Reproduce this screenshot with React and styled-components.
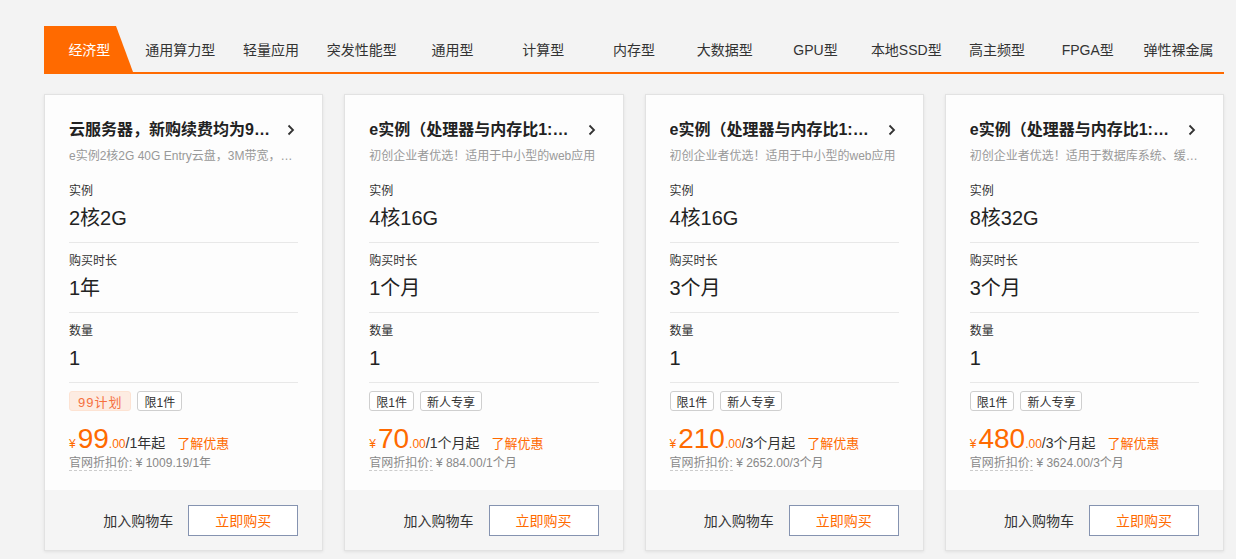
import React from "react";
import styled, { createGlobalStyle } from "styled-components";

const GlobalStyle = createGlobalStyle`
  html, body { margin: 0; padding: 0; background: #f3f3f3; }
  body { font-family: "Liberation Sans", "Noto Sans CJK SC", sans-serif; color: #333; }
  * { box-sizing: border-box; }
`;

const Page = styled.div`
  width: 1236px;
  height: 559px;
  padding: 26px 12px 0 44px;
  overflow: hidden;
`;

const Tabs = styled.div`
  display: flex;
  height: 48px;
  border-bottom: 2px solid #ff6a00;
`;

const Tab = styled.div`
  flex: 1 1 0;
  min-width: 0;
  display: flex;
  align-items: center;
  justify-content: center;
  font-size: 14px;
  color: ${(p) => (p.$active ? "#fff" : "#333")};
  background: ${(p) => (p.$active ? "#ff6a00" : "transparent")};
  clip-path: ${(p) => (p.$active ? "polygon(0 0, 72px 0, 89px 100%, 0 100%)" : "none")};
  white-space: nowrap;
  cursor: pointer;
`;

const Cards = styled.div`
  display: flex;
  gap: 21px;
  margin-top: 20px;
`;

const Card = styled.div`
  flex: 1 1 0;
  min-width: 0;
  background: #fdfdfd;
  border: 1px solid #e2e2e2;
  box-shadow: 0 1px 3px rgba(0, 0, 0, 0.08);
  display: flex;
  flex-direction: column;
`;

const Body = styled.div`
  padding: 24px 24px 18px 24px;
`;

const TitleRow = styled.div`
  display: flex;
  align-items: center;
  height: 22px;
`;

const Title = styled.div`
  flex: 1;
  min-width: 0;
  font-size: 16px;
  font-weight: bold;
  line-height: 22px;
  color: #222;
  white-space: nowrap;
  overflow: hidden;
  text-overflow: ellipsis;
`;

const Chevron = styled.svg`
  width: 8px;
  height: 12px;
  margin-left: 14px;
  margin-right: 3px;
  flex-shrink: 0;
`;

const Sub = styled.div`
  margin-top: 6px;
  font-size: 12px;
  line-height: 18px;
  color: #999;
  white-space: nowrap;
  overflow: hidden;
  text-overflow: ellipsis;
`;

const Specs = styled.div`
  margin-top: 8px;
`;

const Spec = styled.div`
  padding: 9px 0 10px;
  border-bottom: 1px solid #e8e8e8;
`;

const SpecLabel = styled.div`
  font-size: 12px;
  line-height: 18px;
  color: #333;
`;

const SpecValue = styled.div`
  margin-top: 4px;
  font-size: 20px;
  line-height: 28px;
  color: #222;
`;

const TagRow = styled.div`
  display: flex;
  gap: 6px;
  margin-top: 8px;
  height: 20px;
`;

const Tag = styled.span`
  display: inline-flex;
  align-items: center;
  height: 20px;
  padding: 0 ${(p) => (p.$plan ? "8px" : "6px")};
  font-size: ${(p) => (p.$plan ? "13px" : "12px")};
  border-radius: 3px;
  border: 1px solid ${(p) => (p.$plan ? "#fde3d3" : "#cfcfcf")};
  background: ${(p) => (p.$plan ? "#fdece2" : "#fff")};
  color: ${(p) => (p.$plan ? "#f5703e" : "#333")};
  letter-spacing: ${(p) => (p.$plan ? "1px" : "0")};
`;

const PriceRow = styled.div`
  margin-top: 13px;
  height: 30px;
  display: flex;
  align-items: baseline;
  white-space: nowrap;
`;

const Yen = styled.span`
  font-size: 12px;
  color: #ff6a00;
  margin-right: 2px;
`;

const Big = styled.span`
  font-size: 28px;
  color: #ff6a00;
  line-height: 30px;
`;

const Cents = styled.span`
  font-size: 12px;
  color: #ff6a00;
`;

const Unit = styled.span`
  font-size: 14px;
  color: #333;
`;

const Promo = styled.a`
  font-size: 13px;
  color: #ff6a00;
  margin-left: 12px;
  text-decoration: none;
`;

const Official = styled.div`
  margin-top: 0;
  font-size: 12px;
  line-height: 18px;
  color: #888;
  white-space: nowrap;
`;

const Dotted = styled.span`
  border-bottom: 1px dashed #ccc;
`;

const Footer = styled.div`
  height: 60px;
  background: #f5f5f5;
  display: flex;
  align-items: center;
  justify-content: flex-end;
  gap: 15px;
  padding-right: 24px;
`;

const CartLink = styled.span`
  font-size: 14px;
  color: #333;
`;

const BuyButton = styled.button`
  width: 110px;
  height: 31px;
  border: 1px solid #8593b0;
  background: #fff;
  color: #ff6a00;
  font-size: 14px;
  font-family: inherit;
  cursor: pointer;
`;

const tabs = [
  "经济型", "通用算力型", "轻量应用", "突发性能型", "通用型", "计算型", "内存型",
  "大数据型", "GPU型", "本地SSD型", "高主频型", "FPGA型", "弹性裸金属",
];

const cards = [
  {
    title: "云服务器，新购续费均为99元/年",
    sub: "e实例2核2G 40G Entry云盘，3M带宽，不限流量",
    inst: "2核2G", dur: "1年", qty: "1",
    tags: [{ t: "99计划", plan: true }, { t: "限1件" }],
    price: "99", unit: "/1年起", orig: "¥ 1009.19/1年",
  },
  {
    title: "e实例（处理器与内存比1:4）",
    sub: "初创企业者优选！适用于中小型的web应用",
    inst: "4核16G", dur: "1个月", qty: "1",
    tags: [{ t: "限1件" }, { t: "新人专享" }],
    price: "70", unit: "/1个月起", orig: "¥ 884.00/1个月",
  },
  {
    title: "e实例（处理器与内存比1:4）",
    sub: "初创企业者优选！适用于中小型的web应用",
    inst: "4核16G", dur: "3个月", qty: "1",
    tags: [{ t: "限1件" }, { t: "新人专享" }],
    price: "210", unit: "/3个月起", orig: "¥ 2652.00/3个月",
  },
  {
    title: "e实例（处理器与内存比1:4）",
    sub: "初创企业者优选！适用于数据库系统、缓存等场景",
    inst: "8核32G", dur: "3个月", qty: "1",
    tags: [{ t: "限1件" }, { t: "新人专享" }],
    price: "480", unit: "/3个月起", orig: "¥ 3624.00/3个月",
  },
];

export default function App() {
  return (
    <>
      <GlobalStyle />
      <Page>
        <Tabs>
          {tabs.map((t, i) => (
            <Tab key={t} $active={i === 0}>{t}</Tab>
          ))}
        </Tabs>
        <Cards>
          {cards.map((c, i) => (
            <Card key={i}>
              <Body>
                <TitleRow>
                  <Title>{c.title}</Title>
                  <Chevron viewBox="0 0 8 12">
                    <path d="M1.5 1.5 L6 6 L1.5 10.5" fill="none" stroke="#333" strokeWidth="1.8" />
                  </Chevron>
                </TitleRow>
                <Sub>{c.sub}</Sub>
                <Specs>
                  <Spec>
                    <SpecLabel>实例</SpecLabel>
                    <SpecValue>{c.inst}</SpecValue>
                  </Spec>
                  <Spec>
                    <SpecLabel>购买时长</SpecLabel>
                    <SpecValue>{c.dur}</SpecValue>
                  </Spec>
                  <Spec>
                    <SpecLabel>数量</SpecLabel>
                    <SpecValue>{c.qty}</SpecValue>
                  </Spec>
                </Specs>
                <TagRow>
                  {c.tags.map((tg) => (
                    <Tag key={tg.t} $plan={tg.plan}>{tg.t}</Tag>
                  ))}
                </TagRow>
                <PriceRow>
                  <Yen>¥</Yen>
                  <Big>{c.price}</Big>
                  <Cents>.00</Cents>
                  <Unit>{c.unit}</Unit>
                  <Promo>了解优惠</Promo>
                </PriceRow>
                <Official>
                  <Dotted>官网折扣价:</Dotted> {c.orig}
                </Official>
              </Body>
              <Footer>
                <CartLink>加入购物车</CartLink>
                <BuyButton>立即购买</BuyButton>
              </Footer>
            </Card>
          ))}
        </Cards>
      </Page>
    </>
  );
}
